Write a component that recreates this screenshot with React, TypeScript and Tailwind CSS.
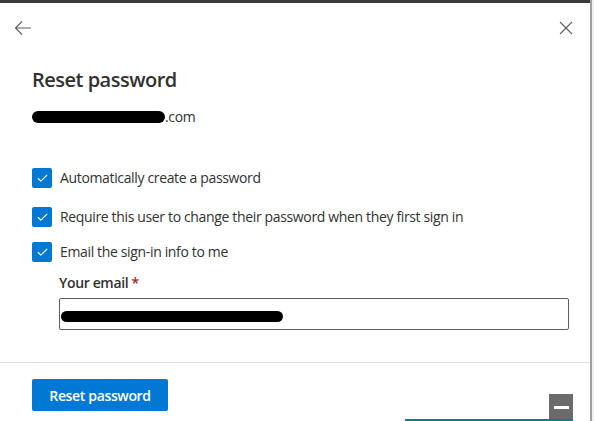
import { Check } from "lucide-react";

const options = [
  { text: "Automatically create a password", gap: "mt-0" },
  { text: "Require this user to change their password when they first sign in", gap: "mt-[19px]" },
  { text: "Email the sign-in info to me", gap: "mt-[15px]" },
];

function Box() {
  return (
    <span className="flex h-5 w-5 shrink-0 items-center justify-center rounded-[2px] bg-[#0078d4]">
      <Check className="h-[13px] w-[13px] text-white" strokeWidth={2} />
    </span>
  );
}

export default function App() {
  return (
    <div className="flex h-[421px] w-[594px] overflow-hidden bg-white font-['Open_Sans',sans-serif] text-[#323130]">
      <div className="relative flex min-w-0 flex-1 flex-col border-t-[3px] border-[#3b3b3b]">
        <div className="flex items-center justify-between px-[14px] pt-[16px]">
          <svg width="18" height="18" viewBox="0 0 18 18" className="text-[#605e5c]">
            <path d="M17 9H2M8 2.5L1.5 9 8 15.5" fill="none" stroke="currentColor" strokeWidth="1.1" />
          </svg>
          <svg width="14" height="14" viewBox="0 0 14 14" className="mr-[3px] text-[#605e5c]">
            <path d="M1 1l12 12M13 1L1 13" fill="none" stroke="currentColor" strokeWidth="1.1" />
          </svg>
        </div>

        <div className="pl-8 pr-[21px] pt-[30px]">
          <h1 className="text-[20px] font-semibold leading-[26px] tracking-[-0.5px]">Reset password</h1>
          <div className="mt-[14px] flex items-center text-[14px] leading-[20px] tracking-[-0.35px]">
            <span className="h-[12px] w-[133px] rounded-full bg-black" />
            <span>.com</span>
          </div>

          <div className="mt-[41px] flex flex-col text-[14px] leading-[20px] tracking-[-0.35px]">
            {options.map((o) => (
              <label key={o.text} className={`flex items-center gap-[8px] ${o.gap}`}>
                <Box />
                <span>{o.text}</span>
              </label>
            ))}
          </div>

          <div className="ml-[27px] mt-[11px]">
            <div className="text-[14px] font-semibold leading-[20px] tracking-[-0.35px]">
              Your email <span className="text-[#a4262c]">*</span>
            </div>
            <div className="relative mt-[5px] h-[32px] w-full rounded-[2px] border border-[#605e5c]">
              <span className="absolute left-[1px] top-[12px] h-[11px] w-[222px] rounded-full bg-black" />
            </div>
          </div>
        </div>

        <div className="mt-[32px] border-t border-[#e1dfdd] px-8 pt-[16px]">
          <button className="h-[32px] w-[136px] rounded-[2px] bg-[#0078d4] text-[14px] font-semibold tracking-[-0.35px] text-white">
            Reset password
          </button>
        </div>

        <div className="absolute bottom-0 right-[17px] flex h-[27px] w-[24px] items-center justify-center bg-[#6b6b6b]">
          <span className="h-[3px] w-[15px] bg-white" />
        </div>
        <div className="absolute bottom-0 right-[17px] h-[2px] w-[168px] bg-[#038387]" />
      </div>
      <div className="w-[4px] border-l-[2px] border-[#a0a0a0] bg-[#f0f0f0]" />
    </div>
  );
}
